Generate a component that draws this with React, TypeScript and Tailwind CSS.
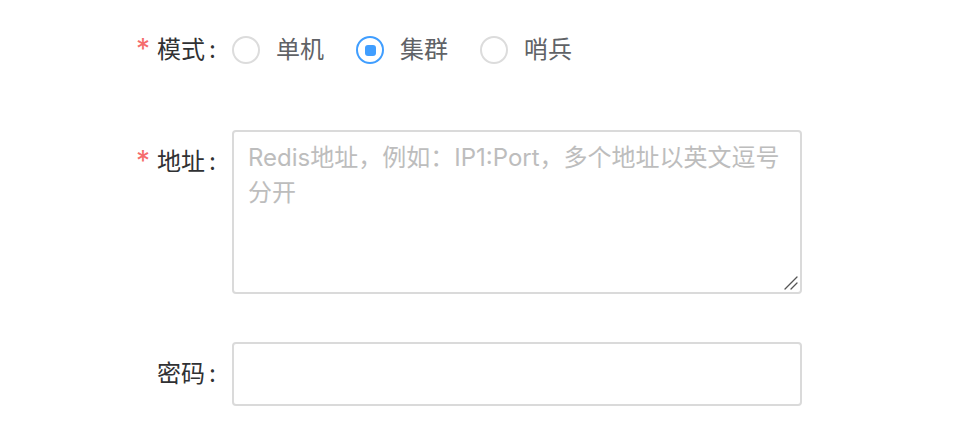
import React, { useState } from "react";

const font = { fontFamily: 'Inter, "Noto Sans CJK SC", sans-serif' };

function Label({ text, required }: { text: string; required?: boolean }) {
  return (
    <div className="w-[232px] h-[64px] shrink-0 flex items-center justify-end pr-[16px] text-[24px] text-[#303133]">
      {required && <span className="text-[28px] leading-none text-[#f56c6c] mr-[7px] -translate-y-[1px]">*</span>}
      <span>{text}</span>
      <span className="ml-[4px]">:</span>
    </div>
  );
}

function Radio({ label, checked, onClick }: { label: string; checked: boolean; onClick: () => void }) {
  return (
    <label className="flex items-center cursor-pointer mr-[32px]" onClick={onClick}>
      <span
        className={
          checked
            ? "w-[28px] h-[28px] rounded-full border-2 border-[#409eff] flex items-center justify-center"
            : "w-[28px] h-[28px] rounded-full border-2 border-[#dcdcdc]"
        }
      >
        {checked && <span className="w-[11px] h-[11px] rounded-[3px] bg-[#409eff]" />}
      </span>
      <span className="ml-[16px] text-[24px] text-[#606266]">{label}</span>
    </label>
  );
}

export default function App() {
  const [mode, setMode] = useState("集群");

  return (
    <div className="w-[964px] h-[432px] bg-white overflow-hidden pt-[18px]" style={font}>
      {/* 模式 */}
      <div className="flex">
        <Label text="模式" required />
        <div className="h-[64px] flex items-center">
          {["单机", "集群", "哨兵"].map((m) => (
            <Radio key={m} label={m} checked={mode === m} onClick={() => setMode(m)} />
          ))}
        </div>
      </div>

      {/* 地址 */}
      <div className="flex mt-[48px]">
        <Label text="地址" required />
        <div className="relative">
          <textarea
            className="block w-[570px] h-[164px] border-2 border-[#dadada] rounded-[4px] px-[14px] pt-[8px] text-[24px] leading-[35px] text-[#606266] placeholder:text-[#bdbdbd] outline-none resize-none"
            placeholder={"Redis地址，例如：IP1:Port，多个地址以英文逗号\n分开"}
          />
          <svg className="absolute right-[4px] bottom-[4px]" width="14" height="14" viewBox="0 0 14 14">
            <path d="M1 13 L13 1 M7 13 L13 7" stroke="#555" strokeWidth="1.3" strokeLinecap="round" />
          </svg>
        </div>
      </div>

      {/* 密码 */}
      <div className="flex mt-[48px]">
        <Label text="密码" />
        <input
          type="password"
          className="w-[570px] h-[64px] border-2 border-[#dadada] rounded-[4px] px-[14px] text-[24px] text-[#606266] outline-none"
        />
      </div>
    </div>
  );
}
